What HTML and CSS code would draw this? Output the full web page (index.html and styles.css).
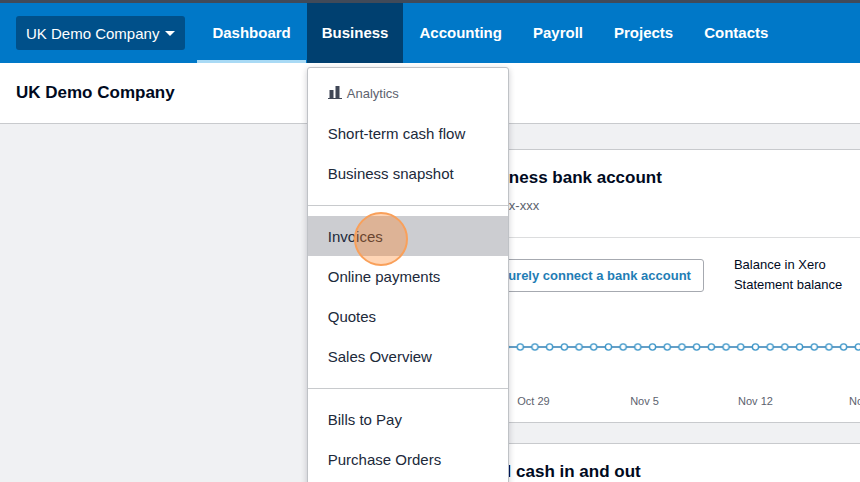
FILE: index.html
```
<!DOCTYPE html>
<html lang="en">
<head>
  <meta charset="UTF-8" />
  <meta name="viewport" content="width=device-width, initial-scale=1.0" />
  <title>UK Demo Company</title>
  <link rel="stylesheet" href="styles.css">
</head>
<body>
  <header class="topbar">
    <button class="company" type="button">
      UK Demo Company
      <svg class="caret" width="10" height="5" viewBox="0 0 10 5" aria-hidden="true"><path d="M0 0h10L5 5z" fill="currentColor"/></svg>
    </button>
    <nav class="nav">
      <a class="nav-link current" href="#">Dashboard</a>
      <div class="nav-item">
        <a class="nav-link open" href="#">Business</a>
        <div class="menu">
          <div class="menu-group">
            <div class="menu-heading">
              <svg width="14" height="16" viewBox="0 0 14 16" aria-hidden="true"><path d="M0 13h1.500V5h4v8h2V1h4v12H14v1H0z" fill="#404756"/></svg>
              Analytics
            </div>
            <a class="menu-link" href="#">Short-term cash flow</a>
            <a class="menu-link" href="#">Business snapshot</a>
          </div>
          <div class="menu-group">
            <a class="menu-link active" href="#">Invoices<span class="click-marker"></span></a>
            <a class="menu-link" href="#">Online payments</a>
            <a class="menu-link" href="#">Quotes</a>
            <a class="menu-link" href="#">Sales Overview</a>
          </div>
          <div class="menu-group">
            <a class="menu-link" href="#">Bills to Pay</a>
            <a class="menu-link" href="#">Purchase Orders</a>
          </div>
        </div>
      </div>
      <a class="nav-link" href="#">Accounting</a>
      <a class="nav-link" href="#">Payroll</a>
      <a class="nav-link" href="#">Projects</a>
      <a class="nav-link" href="#">Contacts</a>
    </nav>
  </header>

  <div class="page-header">
    <h1>UK Demo Company</h1>
  </div>

  <main class="dashboard">
    <section class="card">
      <div class="card-header">
        <h2>Business bank account</h2>
        <p class="account-number">xxx-xxx-xxx</p>
      </div>
      <div class="card-body">
        <div class="account-row">
          <button class="connect" type="button">Securely connect a bank account</button>
          <div class="balances">
            <div>Balance in Xero</div>
            <div>Statement balance</div>
          </div>
        </div>
        <svg class="chart" role="img" aria-label="Account balance">
          <defs>
            <pattern id="points" x="11.500" y="0" width="14.700" height="10" patternUnits="userSpaceOnUse">
              <path d="M0 5h14.700" stroke="#2f7fb4" stroke-width="1.500"/>
              <circle cx="7.350" cy="5" r="3.100" fill="#fff" stroke="#3f97c9" stroke-width="1.400"/>
            </pattern>
          </defs>
          <rect width="100%" height="10" fill="url(#points)"/>
        </svg>
        <div class="chart-labels">
          <span>Oct 29</span>
          <span>Nov 5</span>
          <span>Nov 12</span>
          <span>Nov 19</span>
        </div>
      </div>
    </section>

    <section class="card">
      <div class="card-header">
        <h2>Total cash in and out</h2>
      </div>
    </section>
  </main>
</body>
</html>
```
FILE: styles.css
```
:root {
  --blue: #0078c8;
  --blue-dark: #00508a;
  --blue-darker: #004070;
  --link: #1f7db5;
  --text: #000a1e;
  --text-muted: #5c626e;
  --border: #c8cacd;
  --bg: #f0f1f3;
}

* {
  box-sizing: border-box;
}

body {
  margin: 0;
  height: 100vh;
  overflow: hidden;
  font-family: "Liberation Sans", Arial, sans-serif;
  font-size: 15px;
  color: var(--text);
  background-color: var(--bg);
}

h1,
h2,
p {
  margin: 0;
}

h1,
h2 {
  font-size: 17px;
  line-height: 20px;
}

a {
  text-decoration: none;
}

button {
  font-family: inherit;
  cursor: pointer;
}

.topbar {
  display: flex;
  align-items: center;
  gap: 12px;
  height: 63px;
  padding-left: 16px;
  border-top: 3px solid #404a59;
  background-color: var(--blue);
}

.company {
  display: flex;
  align-items: center;
  gap: 6px;
  height: 34px;
  padding: 0 10px;
  border: none;
  border-radius: 3px;
  font-size: 15px;
  white-space: nowrap;
  color: #fff;
  background-color: var(--blue-dark);
}

.caret {
  flex: none;
}

.nav {
  display: flex;
  gap: 1px;
}

.nav-item {
  position: relative;
}

.nav-link {
  display: block;
  height: 60px;
  padding: 0 15px;
  line-height: 60px;
  font-weight: bold;
  color: #fff;
}

.nav-link.current {
  border-bottom: 3px solid #a9daf5;
}

.nav-link.open {
  background-color: var(--blue-darker);
}

.menu {
  position: absolute;
  top: 64px;
  left: 0;
  z-index: 10;
  width: 202px;
  border: 1px solid #bfc2c6;
  border-radius: 3px;
  background-color: #fff;
  box-shadow: 0 2px 6px rgba(0, 10, 30, 0.2);
}

.menu-group {
  padding: 10px 0 12px;
}

.menu-group:first-child {
  padding-top: 5px;
}

.menu-group + .menu-group {
  border-top: 1px solid var(--border);
}

.menu-heading,
.menu-link {
  display: flex;
  align-items: center;
  height: 40px;
  padding: 0 20px;
}

.menu-heading {
  gap: 5px;
  font-size: 13px;
  color: var(--text-muted);
}

.menu-link {
  position: relative;
  color: #20293a;
}

.menu-link.active {
  background-color: #cccdd1;
}

.click-marker {
  position: absolute;
  top: -4px;
  left: 46px;
  z-index: 1;
  width: 54px;
  height: 54px;
  border: 2px solid #f9a05a;
  border-radius: 50%;
  background-color: rgba(255, 128, 30, 0.33);
}

.page-header {
  padding: 20px 16px;
  border-bottom: 1px solid var(--border);
  background-color: #fff;
}

.dashboard {
  display: flex;
  flex-direction: column;
  gap: 20px;
  padding: 25px 0 0 451px;
}

.card {
  border: 1px solid var(--border);
  border-right: none;
  background-color: #fff;
}

.card-header {
  padding: 18px 20px 23px;
}

.account-number {
  margin-top: 10px;
  font-size: 13px;
  line-height: 16px;
  color: var(--text-muted);
}

.card-body {
  padding: 17px 0 12px 20px;
  border-top: 1px solid #dcddde;
}

.account-row {
  display: flex;
  align-items: center;
  gap: 30px;
}

.connect {
  height: 33px;
  padding: 0 12px;
  border: 1px solid #a6a9b0;
  border-radius: 3px;
  font-size: 13px;
  font-weight: bold;
  white-space: nowrap;
  color: var(--link);
  background-color: #fff;
}

.balances {
  font-size: 13px;
  line-height: 20px;
  white-space: nowrap;
}

.chart {
  display: block;
  width: 100%;
  height: 10px;
  margin-top: 47px;
}

.chart-labels {
  display: flex;
  padding-left: 6px;
  margin-top: 40px;
  overflow: hidden;
  font-size: 11px;
  line-height: 18px;
  color: var(--text-muted);
}

.chart-labels span {
  flex: 0 0 111px;
  text-align: center;
}
```
